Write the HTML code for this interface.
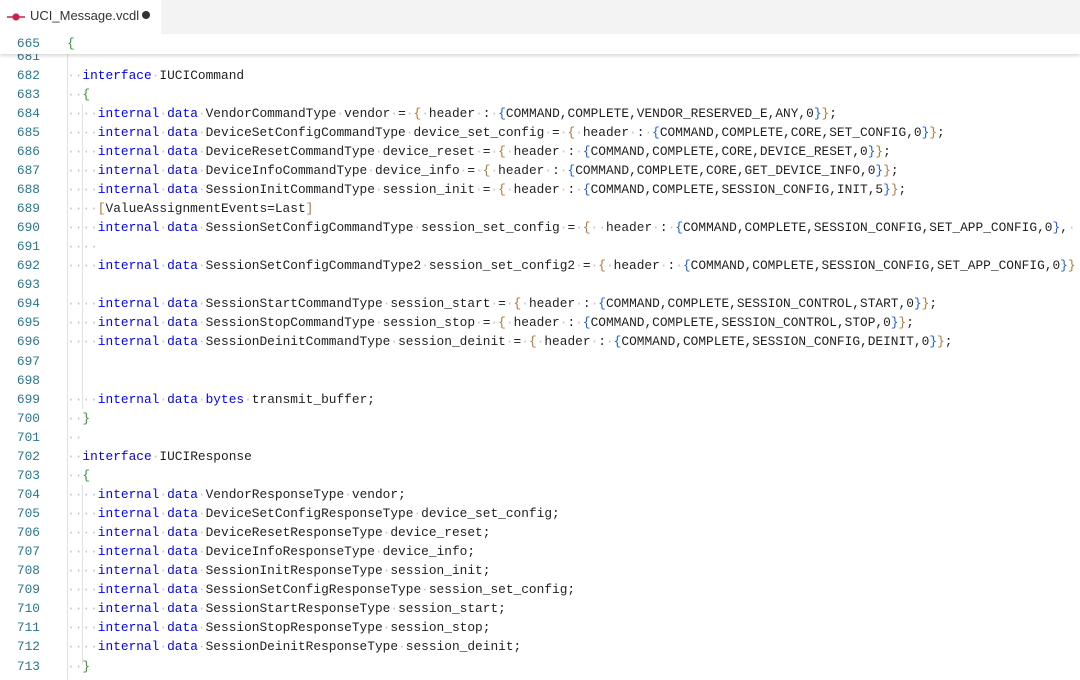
<!DOCTYPE html>
<html><head><meta charset="utf-8"><style>
html,body{margin:0;padding:0;background:#fff;width:1080px;height:680px;overflow:hidden;position:relative}
.tabs{position:absolute;left:0;top:0;width:1080px;height:34px;background:#f3f3f3}
.tab{position:absolute;left:0;top:0;width:161px;height:34px;background:#fff;font-family:"Liberation Sans",sans-serif;font-size:13px;color:#333}
.tab .t{position:absolute;left:30px;top:8px}
.tab .dot{position:absolute;left:142px;top:11px;width:8px;height:8px;border-radius:50%;background:#333}
.mono{font-family:"Liberation Mono",monospace;font-size:12.83px;line-height:19.06px;white-space:pre}
.sticky{position:absolute;left:0;top:34px;width:1080px;height:20px;background:#fff;box-shadow:0 2px 3px rgba(0,0,0,0.15);z-index:2}
.ln{color:#237893;position:absolute;right:0;width:40px;text-align:right}
.ed{position:absolute;left:0;top:54px;width:1080px;height:626px;overflow:hidden}
.nums{position:absolute;left:0;top:-7.5px;width:40px;text-align:right;color:#237893}
.code{position:absolute;left:67px;top:-7.5px;color:#1f1f1f}
.g{position:absolute;width:1px;background:#e0e0e0}
b{color:#0000ff;font-weight:normal}
em{color:#b0763a;font-style:normal}
u{color:#1a5fd6;text-decoration:none}
s{color:#319331;text-decoration:none}
i{color:#c4c4c4;font-style:normal}
</style></head><body>
<div class="tabs"><div class="tab">
<svg style="position:absolute;left:6px;top:10px" width="20" height="14" viewBox="0 0 20 14"><line x1="1" y1="7" x2="19" y2="7" stroke="#c8204a" stroke-width="1.6"/><circle cx="10" cy="7" r="3.6" fill="#c8204a"/></svg>
<span class="t">UCI_Message.vcdl</span><span class="dot"></span></div></div>
<div class="sticky mono"><span style="position:absolute;left:0;width:40px;text-align:right;color:#237893;top:0">665</span><span style="position:absolute;left:67px;top:0;color:#319331">{</span></div>
<div class="ed">
<div class="g" style="left:67px;top:0;height:626px"></div>
<div class="g" style="left:82px;top:50px;height:305px"></div>
<div class="g" style="left:82px;top:431px;height:180px"></div>
<div class="nums mono">681
682
683
684
685
686
687
688
689
690
691
692
693
694
695
696
697
698
699
700
701
702
703
704
705
706
707
708
709
710
711
712
713</div>
<div class="code mono">
<i>··</i><b>interface</b><i>·</i>IUCICommand
<i>··</i><s>{</s>
<i>····</i><b>internal</b><i>·</i><b>data</b><i>·</i>VendorCommandType<i>·</i>vendor<i>·</i>=<i>·</i><em>{</em><i>·</i>header<i>·</i>:<i>·</i><u>{</u>COMMAND,COMPLETE,VENDOR_RESERVED_E,ANY,0<u>}</u><em>}</em>;
<i>····</i><b>internal</b><i>·</i><b>data</b><i>·</i>DeviceSetConfigCommandType<i>·</i>device_set_config<i>·</i>=<i>·</i><em>{</em><i>·</i>header<i>·</i>:<i>·</i><u>{</u>COMMAND,COMPLETE,CORE,SET_CONFIG,0<u>}</u><em>}</em>;
<i>····</i><b>internal</b><i>·</i><b>data</b><i>·</i>DeviceResetCommandType<i>·</i>device_reset<i>·</i>=<i>·</i><em>{</em><i>·</i>header<i>·</i>:<i>·</i><u>{</u>COMMAND,COMPLETE,CORE,DEVICE_RESET,0<u>}</u><em>}</em>;
<i>····</i><b>internal</b><i>·</i><b>data</b><i>·</i>DeviceInfoCommandType<i>·</i>device_info<i>·</i>=<i>·</i><em>{</em><i>·</i>header<i>·</i>:<i>·</i><u>{</u>COMMAND,COMPLETE,CORE,GET_DEVICE_INFO,0<u>}</u><em>}</em>;
<i>····</i><b>internal</b><i>·</i><b>data</b><i>·</i>SessionInitCommandType<i>·</i>session_init<i>·</i>=<i>·</i><em>{</em><i>·</i>header<i>·</i>:<i>·</i><u>{</u>COMMAND,COMPLETE,SESSION_CONFIG,INIT,5<u>}</u><em>}</em>;
<i>····</i><em>[</em>ValueAssignmentEvents=Last<em>]</em>
<i>····</i><b>internal</b><i>·</i><b>data</b><i>·</i>SessionSetConfigCommandType<i>·</i>session_set_config<i>·</i>=<i>·</i><em>{</em><i>··</i>header<i>·</i>:<i>·</i><u>{</u>COMMAND,COMPLETE,SESSION_CONFIG,SET_APP_CONFIG,0<u>}</u>,<i>·</i>
<i>····</i>
<i>····</i><b>internal</b><i>·</i><b>data</b><i>·</i>SessionSetConfigCommandType2<i>·</i>session_set_config2<i>·</i>=<i>·</i><em>{</em><i>·</i>header<i>·</i>:<i>·</i><u>{</u>COMMAND,COMPLETE,SESSION_CONFIG,SET_APP_CONFIG,0<u>}</u><em>}</em>

<i>····</i><b>internal</b><i>·</i><b>data</b><i>·</i>SessionStartCommandType<i>·</i>session_start<i>·</i>=<i>·</i><em>{</em><i>·</i>header<i>·</i>:<i>·</i><u>{</u>COMMAND,COMPLETE,SESSION_CONTROL,START,0<u>}</u><em>}</em>;
<i>····</i><b>internal</b><i>·</i><b>data</b><i>·</i>SessionStopCommandType<i>·</i>session_stop<i>·</i>=<i>·</i><em>{</em><i>·</i>header<i>·</i>:<i>·</i><u>{</u>COMMAND,COMPLETE,SESSION_CONTROL,STOP,0<u>}</u><em>}</em>;
<i>····</i><b>internal</b><i>·</i><b>data</b><i>·</i>SessionDeinitCommandType<i>·</i>session_deinit<i>·</i>=<i>·</i><em>{</em><i>·</i>header<i>·</i>:<i>·</i><u>{</u>COMMAND,COMPLETE,SESSION_CONFIG,DEINIT,0<u>}</u><em>}</em>;


<i>····</i><b>internal</b><i>·</i><b>data</b><i>·</i><b>bytes</b><i>·</i>transmit_buffer;
<i>··</i><s>}</s>
<i>··</i>
<i>··</i><b>interface</b><i>·</i>IUCIResponse
<i>··</i><s>{</s>
<i>····</i><b>internal</b><i>·</i><b>data</b><i>·</i>VendorResponseType<i>·</i>vendor;
<i>····</i><b>internal</b><i>·</i><b>data</b><i>·</i>DeviceSetConfigResponseType<i>·</i>device_set_config;
<i>····</i><b>internal</b><i>·</i><b>data</b><i>·</i>DeviceResetResponseType<i>·</i>device_reset;
<i>····</i><b>internal</b><i>·</i><b>data</b><i>·</i>DeviceInfoResponseType<i>·</i>device_info;
<i>····</i><b>internal</b><i>·</i><b>data</b><i>·</i>SessionInitResponseType<i>·</i>session_init;
<i>····</i><b>internal</b><i>·</i><b>data</b><i>·</i>SessionSetConfigResponseType<i>·</i>session_set_config;
<i>····</i><b>internal</b><i>·</i><b>data</b><i>·</i>SessionStartResponseType<i>·</i>session_start;
<i>····</i><b>internal</b><i>·</i><b>data</b><i>·</i>SessionStopResponseType<i>·</i>session_stop;
<i>····</i><b>internal</b><i>·</i><b>data</b><i>·</i>SessionDeinitResponseType<i>·</i>session_deinit;
<i>··</i><s>}</s></div>
</div>
</body></html>
